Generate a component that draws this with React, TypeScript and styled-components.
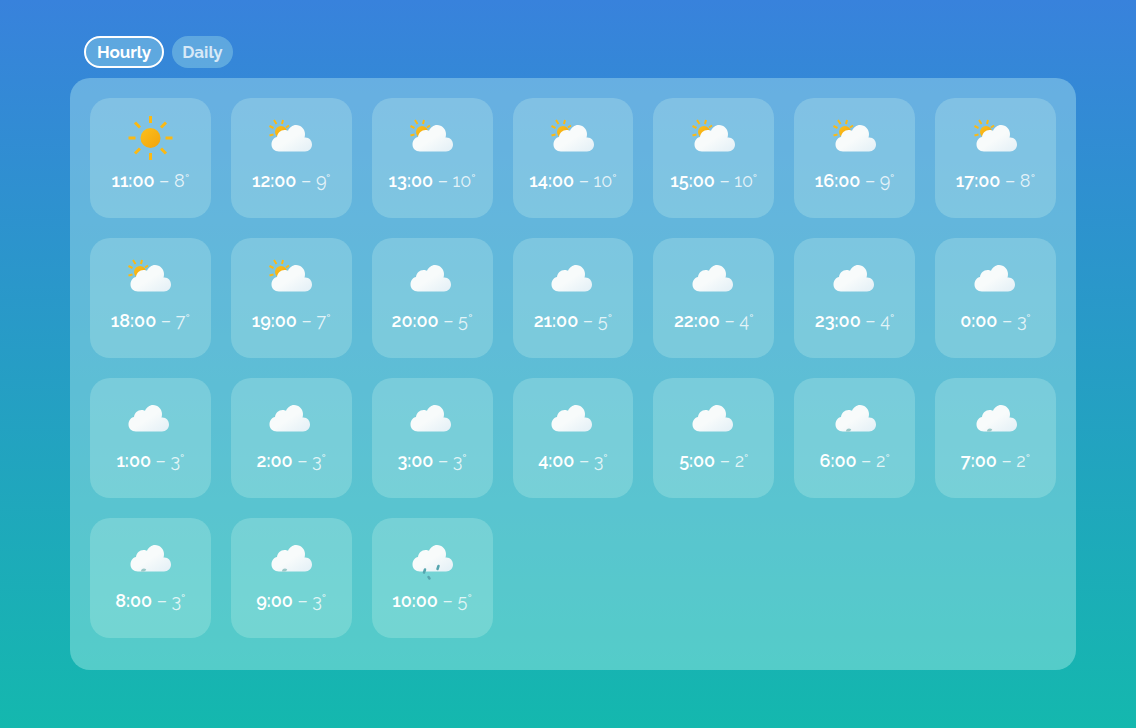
import React, { useState } from "react";
import styled, { createGlobalStyle } from "styled-components";

type Sky = "sun" | "partly" | "cloud" | "drizzle" | "rain";

interface Hour {
  time: string;
  temp: number;
  sky: Sky;
}

const hours: Hour[] = [
  { time: "11:00", temp: 8, sky: "sun" },
  { time: "12:00", temp: 9, sky: "partly" },
  { time: "13:00", temp: 10, sky: "partly" },
  { time: "14:00", temp: 10, sky: "partly" },
  { time: "15:00", temp: 10, sky: "partly" },
  { time: "16:00", temp: 9, sky: "partly" },
  { time: "17:00", temp: 8, sky: "partly" },
  { time: "18:00", temp: 7, sky: "partly" },
  { time: "19:00", temp: 7, sky: "partly" },
  { time: "20:00", temp: 5, sky: "cloud" },
  { time: "21:00", temp: 5, sky: "cloud" },
  { time: "22:00", temp: 4, sky: "cloud" },
  { time: "23:00", temp: 4, sky: "cloud" },
  { time: "0:00", temp: 3, sky: "cloud" },
  { time: "1:00", temp: 3, sky: "cloud" },
  { time: "2:00", temp: 3, sky: "cloud" },
  { time: "3:00", temp: 3, sky: "cloud" },
  { time: "4:00", temp: 3, sky: "cloud" },
  { time: "5:00", temp: 2, sky: "cloud" },
  { time: "6:00", temp: 2, sky: "drizzle" },
  { time: "7:00", temp: 2, sky: "drizzle" },
  { time: "8:00", temp: 3, sky: "drizzle" },
  { time: "9:00", temp: 3, sky: "drizzle" },
  { time: "10:00", temp: 5, sky: "rain" },
];

const GlobalStyle = createGlobalStyle`
  *, *::before, *::after { box-sizing: border-box; }
  body {
    margin: 0;
    min-height: 100vh;
    font-family: Raleway, Lato, sans-serif;
    color: #fff;
    background: linear-gradient(#3882dc, #14b8ae) no-repeat;
  }
`;

const Page = styled.main`
  padding: 36px 60px 58px 70px;
`;

const Tabs = styled.nav`
  display: flex;
  gap: 8px;
  padding-left: 14px;
  margin-bottom: 10px;
`;

const Tab = styled.button<{ $active: boolean }>`
  height: 32px;
  padding: 0 8px;
  min-width: ${({ $active }) => ($active ? 80 : 61)}px;
  border: 2px solid ${({ $active }) => ($active ? "#fff" : "transparent")};
  border-radius: 16px;
  background: rgba(190, 250, 240, 0.3);
  background-clip: border-box;
  background-origin: border-box;
  color: ${({ $active }) => ($active ? "#fff" : "rgba(255, 255, 255, 0.75)")};
  font: inherit;
  font-size: 17px;
  font-weight: 700;
  line-height: 20px;
  cursor: pointer;
`;

const Panel = styled.section`
  display: grid;
  grid-template-columns: repeat(7, minmax(0, 1fr));
  grid-auto-rows: 120px;
  gap: 20px;
  padding: 20px 20px 32px;
  border-radius: 20px;
  background: rgba(210, 255, 250, 0.33);
`;

const Card = styled.article`
  display: flex;
  flex-direction: column;
  align-items: center;
  padding-top: 8px;
  border-radius: 20px;
  background: rgba(225, 255, 240, 0.22);
`;

const Icon = styled.svg`
  width: 64px;
  height: 64px;
`;

const Reading = styled.p`
  margin: 0;
  font-size: 18px;
  line-height: 22px;
  white-space: nowrap;
  color: rgba(255, 255, 255, 0.8);
`;

const Time = styled.time`
  font-weight: 600;
  color: #fff;
`;

function CloudShape() {
  return (
    <path
      d="M20 45.500C15.500 45.500 12.500 42.500 12.500 38.500C12.500 34.500 15 31.500 18 31C18.500 27 21.500 24 25.500 24C27 24 28 24.300 29 24.800C30.500 21.500 33.500 19 37 19C42 19 46 23 46 28C46 29.500 45.800 30.500 45.500 31.500C50 31 53 34.500 53 38.500C53 42.500 50 45.500 46 45.500Z"
      fill="url(#cloudFill)"
    />
  );
}

function SkyIcon({ sky }: { sky: Sky }) {
  return (
    <Icon viewBox="0 0 64 64" aria-hidden="true">
      {sky === "sun" && (
        <>
          <circle cx="32.500" cy="32" r="10" fill="url(#sunFill)" />
          <path
            d="M32.500 10v7M32.500 47v7M10.500 32h7M47.500 32h7M17 16.500l5 5M43 42.500l5 5M48 16.500l-5 5M22 42.500l-5 5"
            stroke="#fbb914"
            strokeWidth="3"
            fill="none"
          />
        </>
      )}
      {sky === "partly" && (
        <>
          <circle cx="22" cy="26" r="6" fill="url(#sunFill)" />
          <path
            d="M15 14l2.500 4M24 14l-1 4M10.500 20l4 2M10.500 29.500l4-1M30 19.500l-3 2"
            stroke="#fbb914"
            strokeWidth="2"
            fill="none"
          />
        </>
      )}
      {sky !== "sun" && (
        <g transform={sky === "cloud" ? "translate(-2 0)" : undefined}>
          <CloudShape />
        </g>
      )}
      {sky === "drizzle" && (
        <path d="M23 45.500c0-2 1.200-3 3-3c1.500 0 2.200.8 2.200 1.500l-2 1.500z" fill="#9cc8c8" />
      )}
      {sky === "rain" && (
        <path
          d="M25 43.500l-1 3M38.500 40l-1 3M28.500 51l1 1.500"
          stroke="#55a5ae"
          strokeWidth="2.500"
          strokeLinecap="round"
          fill="none"
        />
      )}
    </Icon>
  );
}

const Defs = styled.svg`
  display: block;
  width: 0;
  height: 0;
`;

export default function App() {
  const [view, setView] = useState("Hourly");
  return (
    <>
      <GlobalStyle />
      <Defs aria-hidden="true">
        <defs>
          <linearGradient id="sunFill" x1="0" y1="0" x2="1" y2="1">
            <stop offset="0" stopColor="#fcc01c" />
            <stop offset="1" stopColor="#f2a30c" />
          </linearGradient>
          <linearGradient id="cloudFill" x1="0" y1="0" x2="1" y2="1">
            <stop offset="0.5" stopColor="#f8fbfb" />
            <stop offset="1" stopColor="#e2eff6" />
          </linearGradient>
        </defs>
      </Defs>
      <Page>
        <Tabs aria-label="Forecast">
          {["Hourly", "Daily"].map((name) => (
            <Tab
              key={name}
              type="button"
              $active={view === name}
              aria-pressed={view === name}
              onClick={() => setView(name)}
            >
              {name}
            </Tab>
          ))}
        </Tabs>
        <Panel>
          {hours.map(({ time, temp, sky }) => (
            <Card key={time}>
              <SkyIcon sky={sky} />
              <Reading>
                <Time>{time}</Time> – {temp}°
              </Reading>
            </Card>
          ))}
        </Panel>
      </Page>
    </>
  );
}
